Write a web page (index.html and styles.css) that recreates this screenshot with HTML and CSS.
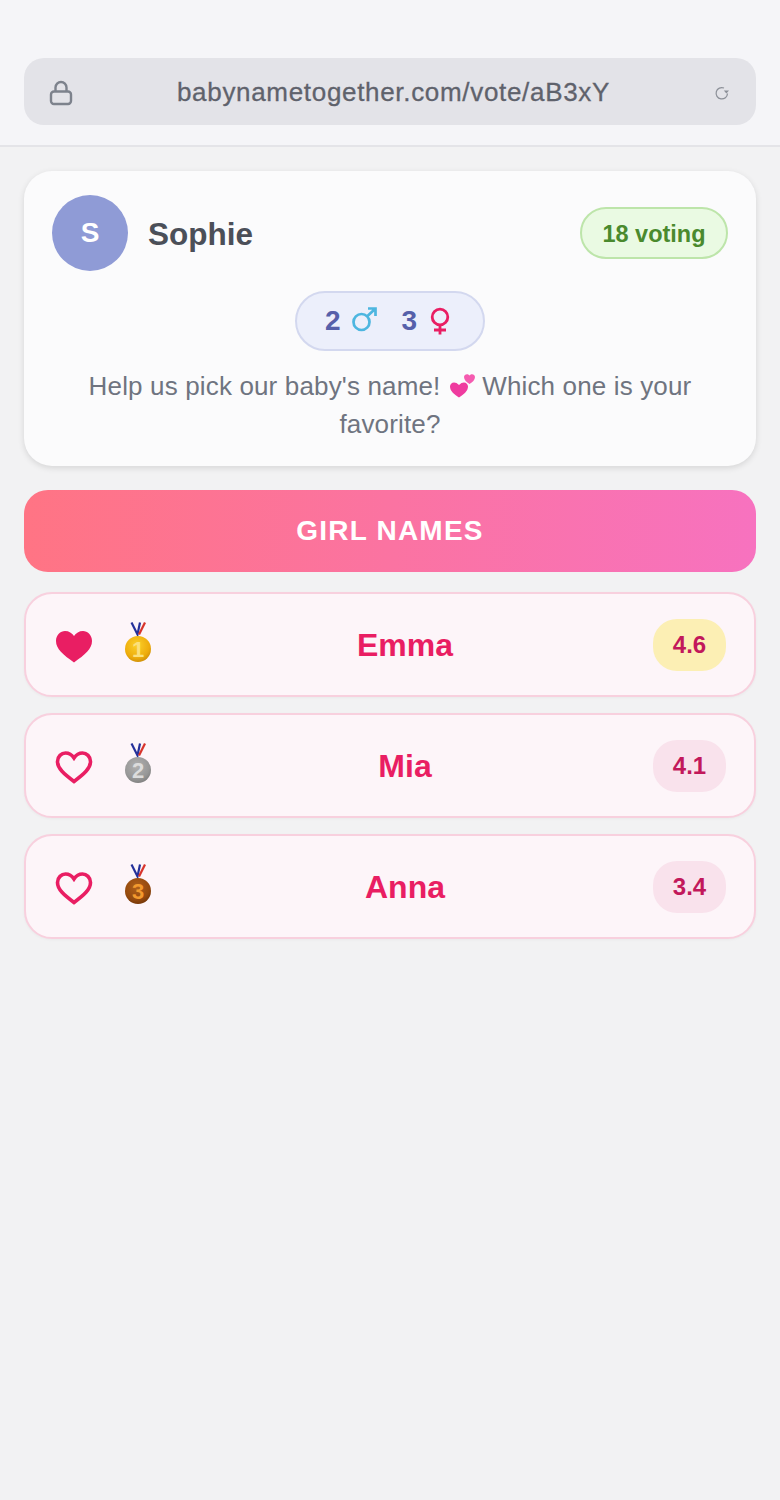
FILE: index.html
```html
<!DOCTYPE html>
<html lang="en">
<head>
<meta charset="utf-8">
<title>Vote</title>
<link rel="stylesheet" href="styles.css">
</head>
<body>
<svg class="defs" width="0" height="0" aria-hidden="true">
  <defs>
    <radialGradient id="gold" cx="45%" cy="35%" r="70%"><stop offset="0" stop-color="#fbd02a"/><stop offset="0.7" stop-color="#eeac0c"/><stop offset="1" stop-color="#c98a08"/></radialGradient>
    <radialGradient id="silver" cx="45%" cy="35%" r="70%"><stop offset="0" stop-color="#b0b0b0"/><stop offset="0.7" stop-color="#979797"/><stop offset="1" stop-color="#7c7c7c"/></radialGradient>
    <radialGradient id="bronze" cx="45%" cy="35%" r="70%"><stop offset="0" stop-color="#b0601a"/><stop offset="0.7" stop-color="#94490e"/><stop offset="1" stop-color="#6f3308"/></radialGradient>
  </defs>
</svg>
<header class="browser-bar">
  <div class="address">
    <svg class="lock" viewBox="0 0 24 26" width="24" height="26" fill="none" stroke="#7d828c" stroke-width="2.400"><rect x="2" y="11.500" width="20" height="12.500" rx="3"/><path d="M6.500 11.500V7.500a5.500 5.500 0 0 1 11 0V11.500"/></svg>
    <span class="url">babynametogether.com/vote/aB3xY</span>
    <svg class="reload" viewBox="0 0 16 16" width="16" height="16" fill="none" stroke="#8b8f97" stroke-width="1.200"><path d="M13.500 8.500A5.700 5.700 0 1 1 10 3"/><path d="M9.800 5.500h5.200L12.400 8.400z" fill="#8b8f97" stroke="none"/></svg>
  </div>
</header>
<main class="content">
  <section class="card">
    <div class="card-top">
      <div class="host">
        <div class="avatar">S</div>
        <span class="host-name">Sophie</span>
      </div>
      <div class="voting">18 voting</div>
    </div>
    <div class="counts">
      <span class="count">2</span>
      <svg class="sex-male" viewBox="0 0 25 25" width="25" height="25" fill="none" stroke="#4db6e0" stroke-width="2.700"><circle cx="9.500" cy="15" r="8"/><path d="M15.500 9 23.500 1.500M16 1.500h7.500V9"/></svg>
      <span class="count">3</span>
      <svg class="sex-female" viewBox="0 0 22 28" width="22" height="28" fill="none" stroke="#e91e63" stroke-width="2.800"><circle cx="11" cy="10" r="7.800"/><path d="M11 18V27.500M5 23h12"/></svg>
    </div>
    <p class="message"><span>Help us pick our baby's name!</span> <svg class="hearts" viewBox="0 0 26 26" width="26" height="26"><path d="M9 24.500C4 21 0 18 0 13.500C0 9.500 5 7.500 9 12C13 7.500 18 9.500 18 13.500C18 18 14 21 9 24.500Z" fill="#ef3b9f"/><path d="M19.500 11C16.500 9 14 7 14 4C14 1.500 17.500 0 19.500 2.500C21.500 0 25 1.500 25 4C25 7 22.500 9 19.500 11Z" fill="#f55bb0"/></svg> <span>Which one is your</span> <span>favorite?</span></p>
  </section>

  <div class="banner">GIRL NAMES</div>

  <ul class="names">
    <li class="name-row">
      <svg class="heart" viewBox="0 0 40 34" width="40" height="34"><path class="heart-full" d="M20 33.500C9 25.500 2 20 2 12C2 6 6.500 2 11 2C15 2 18 4 20 7C22 4 25 2 29 2C33.500 2 38 6 38 12C38 20 31 25.500 20 33.500Z"/></svg>
      <svg class="medal" viewBox="0 0 28 42" width="28" height="42"><path class="strap-blue" d="M7.500 .5 13.500 12.500 16 .5"/><path class="strap-red" d="M21 .5 15 12.500"/><circle cx="14" cy="27" r="13" fill="url(#gold)"/><text class="medal-num medal-num-gold" x="14" y="35">1</text></svg>
      <span class="name">Emma</span>
      <span class="score score-top">4.6</span>
    </li>
    <li class="name-row">
      <svg class="heart" viewBox="0 0 40 34" width="40" height="34"><path class="heart-line" d="M20 31.500C10 24 3.500 18.500 3.500 11.500C3.500 6.500 7.500 3 11.500 3C15 3 18 5 20 8C22 5 25 3 28.500 3C32.500 3 36.500 6.500 36.500 11.500C36.500 18.500 30 24 20 31.500Z"/></svg>
      <svg class="medal" viewBox="0 0 28 42" width="28" height="42"><path class="strap-blue" d="M7.500 .5 13.500 12.500 16 .5"/><path class="strap-red" d="M21 .5 15 12.500"/><circle cx="14" cy="27" r="13" fill="url(#silver)"/><text class="medal-num medal-num-silver" x="14" y="35">2</text></svg>
      <span class="name">Mia</span>
      <span class="score">4.1</span>
    </li>
    <li class="name-row">
      <svg class="heart" viewBox="0 0 40 34" width="40" height="34"><path class="heart-line" d="M20 31.500C10 24 3.500 18.500 3.500 11.500C3.500 6.500 7.500 3 11.500 3C15 3 18 5 20 8C22 5 25 3 28.500 3C32.500 3 36.500 6.500 36.500 11.500C36.500 18.500 30 24 20 31.500Z"/></svg>
      <svg class="medal" viewBox="0 0 28 42" width="28" height="42"><path class="strap-blue" d="M7.500 .5 13.500 12.500 16 .5"/><path class="strap-red" d="M21 .5 15 12.500"/><circle cx="14" cy="27" r="13" fill="url(#bronze)"/><text class="medal-num medal-num-bronze" x="14" y="35">3</text></svg>
      <span class="name">Anna</span>
      <span class="score">3.4</span>
    </li>
  </ul>
</main>
</body>
</html>
```
FILE: styles.css
```css
* { box-sizing: border-box; }
html, body { margin: 0; padding: 0; }
body {
  width: 780px;
  height: 1500px;
  overflow: hidden;
  background: #f2f2f3;
  font-family: "Liberation Sans", Arial, sans-serif;
}
.defs { display: block; }
.browser-bar {
  height: 147px;
  padding: 58px 24px 0;
  background: #f5f5f8;
  border-bottom: 2px solid #e4e4e8;
}
.address {
  height: 67px;
  border-radius: 20px;
  background: #e3e3e8;
  display: flex;
  align-items: center;
  padding: 0 26px 0 25px;
}
.lock { flex: none; margin-top: 2px; }
.url {
  flex: 1;
  padding-top: 2px;
  text-align: center;
  font-size: 26px;
  letter-spacing: 0.68px;
  color: #5f626c;
  -webkit-text-stroke: 0.3px #5f626c;
}
.reload { flex: none; margin-top: 2px; }
.content {
  padding: 24px 24px 0;
  display: flex;
  flex-direction: column;
}
.card {
  height: 295px;
  padding: 24px 28px 0;
  border-radius: 28px;
  background: #fbfbfc;
  box-shadow: 0 2px 6px rgba(0, 0, 0, 0.12);
}
.card-top {
  display: flex;
  align-items: center;
  justify-content: space-between;
}
.host {
  display: flex;
  align-items: center;
  gap: 20px;
}
.avatar {
  width: 76px;
  height: 76px;
  border-radius: 50%;
  background: #8f9bd6;
  color: #fff;
  font-size: 28px;
  font-weight: 700;
  display: flex;
  align-items: center;
  justify-content: center;
}
.host-name {
  padding-top: 2px;
  font-size: 31.500px;
  font-weight: 700;
  color: #4b4f58;
}
.voting {
  width: 148px;
  height: 52px;
  padding-top: 2px;
  border: 2px solid #bde5aa;
  border-radius: 26px;
  background: #eafae3;
  color: #4a8a2e;
  font-size: 23.500px;
  font-weight: 700;
  display: flex;
  align-items: center;
  justify-content: center;
}
.counts {
  width: 190px;
  height: 60px;
  margin: 20px auto 0;
  border: 2px solid #d3d8ef;
  border-radius: 30px;
  background: #eceffb;
  display: flex;
  align-items: center;
  padding-left: 28px;
}
.count {
  font-size: 28px;
  font-weight: 700;
  color: #5660aa;
}
.sex-male { margin: -3px 25px 0 11px; }
.sex-female { margin-left: 12px; }
.message {
  margin: 16px 0 0;
  text-align: center;
  font-size: 26px;
  line-height: 38px;
  letter-spacing: 0.15px;
  color: #6f7480;
}
.hearts { vertical-align: -4px; margin: 0 -1px 0 2px; }
.banner {
  height: 82px;
  margin-top: 24px;
  border-radius: 24px;
  background: linear-gradient(90deg, #ff7484, #f772bf);
  color: #fff;
  font-size: 28px;
  font-weight: 700;
  letter-spacing: 1.200px;
  display: flex;
  align-items: center;
  justify-content: center;
}
.names {
  list-style: none;
  margin: 20px 0 0;
  padding: 0;
  display: flex;
  flex-direction: column;
  gap: 16px;
}
.name-row {
  height: 105px;
  border: 2px solid #f8d0de;
  border-radius: 28px;
  background: #fdf5f9;
  box-shadow: 0 1px 3px rgba(0, 0, 0, 0.04);
  display: flex;
  align-items: center;
  padding: 0 28px;
}
.heart { flex: none; margin-top: 2px; }
.heart-full { fill: #e91e63; }
.heart-line { fill: none; stroke: #e91e63; stroke-width: 3.600; }
.medal { flex: none; margin: -3px 5px 0 30px; }
.strap-blue { fill: none; stroke: #25319a; stroke-width: 2.200; }
.strap-red { fill: none; stroke: #d8342c; stroke-width: 2.200; }
.medal-num {
  font-family: "Liberation Sans", Arial, sans-serif;
  font-size: 22px;
  font-weight: 700;
  text-anchor: middle;
}
.medal-num-gold { fill: #fbe07c; }
.medal-num-silver { fill: #dcdcdc; }
.medal-num-bronze { fill: #f39a2e; }
.name {
  flex: 1;
  padding-top: 1px;
  text-align: center;
  font-size: 32px;
  font-weight: 700;
  color: #e91e63;
}
.score {
  flex: none;
  width: 73px;
  height: 52px;
  padding-top: 1px;
  border-radius: 24px;
  background: #f9e2ec;
  color: #c2185b;
  font-size: 24px;
  font-weight: 700;
  display: flex;
  align-items: center;
  justify-content: center;
}
.score-top { background: #fcefb4; }
```
